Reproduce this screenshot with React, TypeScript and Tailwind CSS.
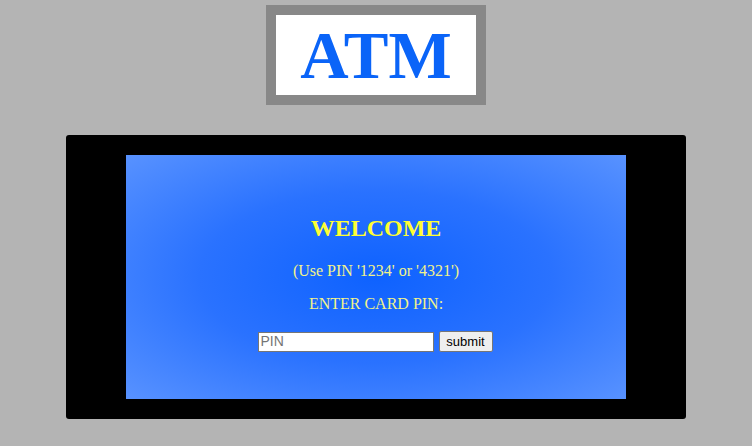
import React, { useState } from 'react';

export default function App() {
  const [pin, setPin] = useState('');

  return (
    <div className="min-h-[446px] w-full bg-[#b4b4b4] pt-[5px] font-['Liberation_Serif',serif]">
      {/* Logo */}
      <div className="mx-auto w-[220px] h-[100px] border-[10px] border-[#888888] bg-white flex items-center justify-center">
        <h1 className="text-[67px] leading-none font-bold text-[#0a64f8]">ATM</h1>
      </div>

      {/* Machine */}
      <div className="mx-auto mt-[30px] w-[620px] h-[284px] bg-black rounded-[3px] px-[60px] py-[20px]">
        <div className="h-[244px] w-[500px] bg-[radial-gradient(ellipse_at_center,#0e62ff_0%,#2a72ff_50%,#5892ff_100%)] flex flex-col items-center pt-[59px]">
          <h2 className="text-[24px] leading-[28px] font-bold text-[#ffff33]">WELCOME</h2>
          <p className="mt-[20px] text-[16px] leading-[18px] text-[#f2f38a]">(Use PIN '1234' or '4321')</p>
          <p className="mt-[15px] text-[16px] leading-[18px] text-[#f2f38a]">ENTER CARD PIN:</p>
          <form
            className="mt-[18px] mr-[2px] flex items-center gap-[5px] font-['Liberation_Sans',Arial,sans-serif]"
            onSubmit={(e) => e.preventDefault()}
          >
            <input
              type="password"
              value={pin}
              onChange={(e) => setPin(e.target.value)}
              placeholder="PIN"
              className="w-[176px] h-[20px] bg-white border border-[#767676] px-[2px] text-[14px] text-black placeholder:text-[#757575] outline-none"
            />
            <button
              type="submit"
              className="h-[21px] w-[54px] bg-[#efefef] border border-[#767676] rounded-[2px] text-[13px] text-black"
            >
              submit
            </button>
          </form>
        </div>
      </div>
    </div>
  );
}
